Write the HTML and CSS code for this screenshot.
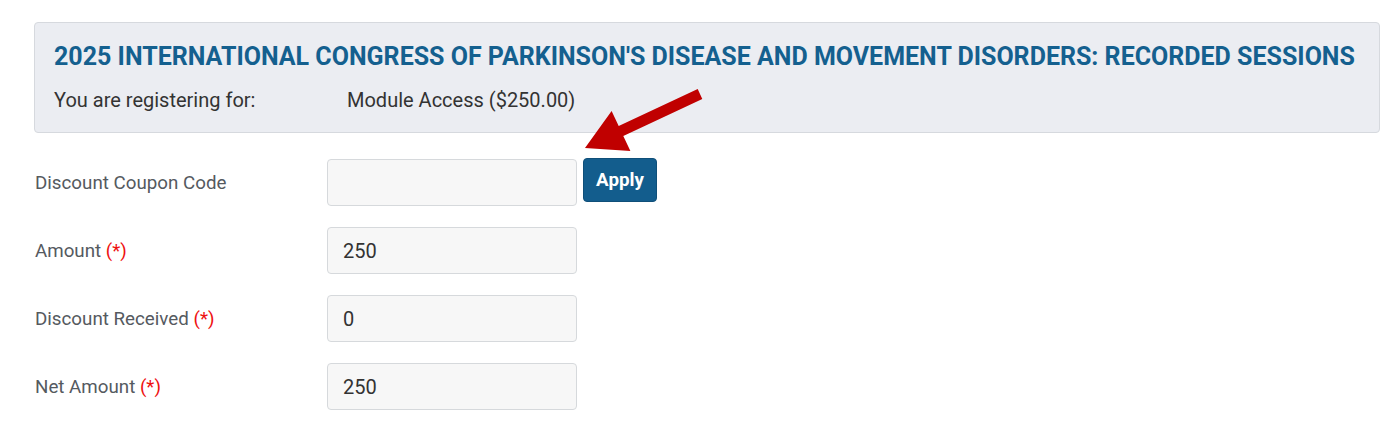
FILE: index.html
```html
<!DOCTYPE html>
<html lang="en">
<head>
<meta charset="utf-8">
<title>Registration</title>
<link rel="stylesheet" href="styles.css">
</head>
<body>
<div class="page">
  <section class="summary">
    <h1 class="summary-title">2025 INTERNATIONAL CONGRESS OF PARKINSON'S DISEASE AND MOVEMENT DISORDERS: RECORDED SESSIONS</h1>
    <div class="summary-row">
      <span class="summary-label">You are registering for:</span>
      <span class="summary-value">Module Access ($250.00)</span>
    </div>
  </section>

  <form class="form">
    <div class="form-row">
      <label class="form-label">Discount Coupon Code</label>
      <div class="form-control">
        <input class="field" type="text" value="">
        <button type="button" class="btn-apply">Apply</button>
      </div>
    </div>
    <div class="form-row">
      <label class="form-label">Amount <span class="req">(*)</span></label>
      <div class="form-control"><input class="field" type="text" value="250"></div>
    </div>
    <div class="form-row">
      <label class="form-label">Discount Received <span class="req">(*)</span></label>
      <div class="form-control"><input class="field" type="text" value="0"></div>
    </div>
    <div class="form-row">
      <label class="form-label">Net Amount <span class="req">(*)</span></label>
      <div class="form-control"><input class="field" type="text" value="250"></div>
    </div>
  </form>

  <svg class="annot-arrow" width="1392" height="429" viewBox="0 0 1392 429" aria-hidden="true">
    <polygon fill="#c00000" points="702.3,99 697.7,89 618.7,126 611.6,111.1 585,148 630.4,150.9 623.3,136"/>
  </svg>
</div>
</body>
</html>
```

FILE: styles.css
```css
* { box-sizing: border-box; }

html, body {
  margin: 0;
  padding: 0;
  background: #ffffff;
}

body {
  font-family: Roboto, "Liberation Sans", Arial, sans-serif;
  color: #333333;
}

.page {
  position: relative;
  width: 1392px;
  height: 429px;
  padding: 22px 12px 0 34px;
  overflow: hidden;
}

.summary {
  background: #ebedf2;
  border: 1px solid #d6d9de;
  border-radius: 4px;
  padding: 18px 19px 19px 19px;
}

.summary-title {
  margin: 0 0 14px 0;
  font-size: 25px;
  line-height: 32px;
  font-weight: 700;
  color: #14608f;
  white-space: nowrap;
}

.summary-row {
  display: grid;
  grid-template-columns: 293px 1fr;
  font-size: 20px;
  line-height: 26px;
  color: #333333;
}

.form {
  display: flex;
  flex-direction: column;
  gap: 21px;
  padding: 26px 0 0 1px;
}

.form-row {
  display: grid;
  grid-template-columns: 292px 1fr;
  align-items: center;
}

.form-label {
  font-size: 18.75px;
  line-height: 26px;
  color: #555a5f;
}

.req {
  color: #ee1111;
}

.form-control {
  display: flex;
  align-items: flex-start;
  gap: 6px;
}

.field {
  width: 250px;
  height: 47px;
  padding: 0 15px;
  background: #f7f7f7;
  border: 1px solid #d6d9dc;
  border-radius: 4px;
  font-family: Roboto, "Liberation Sans", Arial, sans-serif;
  font-size: 20px;
  color: #333333;
  outline: none;
}

.btn-apply {
  width: 74px;
  height: 44px;
  margin-top: -1px;
  background: #135d8d;
  border: 1px solid #0f4f79;
  border-radius: 4px;
  color: #ffffff;
  font-family: Roboto, "Liberation Sans", Arial, sans-serif;
  font-size: 18.75px;
  font-weight: 700;
  padding: 0;
}

.annot-arrow {
  position: absolute;
  left: 0;
  top: 0;
  pointer-events: none;
}
```
